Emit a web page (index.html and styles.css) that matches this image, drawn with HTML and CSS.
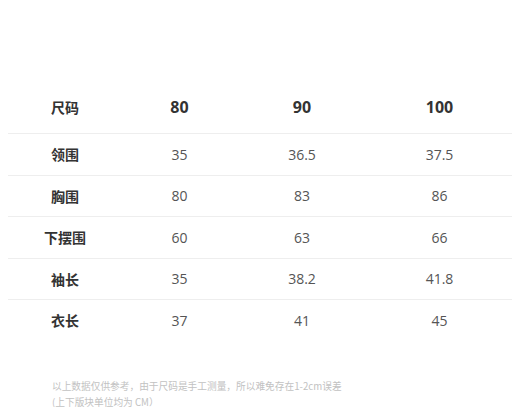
FILE: index.html
```html
<!DOCTYPE html>
<html>
<head>
<meta charset="utf-8">
<link rel="stylesheet" href="styles.css">
</head>
<body>
<div class="page">
  <div class="table">
    <div class="row head">
      <div class="label">尺码</div><div>80</div><div>90</div><div>100</div>
    </div>
    <div class="row">
      <div class="label">领围</div><div>35</div><div>36.5</div><div>37.5</div>
    </div>
    <div class="row">
      <div class="label">胸围</div><div>80</div><div>83</div><div>86</div>
    </div>
    <div class="row">
      <div class="label">下摆围</div><div>60</div><div>63</div><div>66</div>
    </div>
    <div class="row">
      <div class="label">袖长</div><div>35</div><div>38.2</div><div>41.8</div>
    </div>
    <div class="row last">
      <div class="label">衣长</div><div>37</div><div>41</div><div>45</div>
    </div>
  </div>
  <p class="note">以上数据仅供参考，由于尺码是手工测量，所以难免存在1-2cm误差<br>(上下版块单位均为 CM）</p>
</div>
</body>
</html>
```

FILE: styles.css
```css
html, body {
  margin: 0;
  padding: 0;
  background: #fff;
}
.page {
  padding: 81px 8px 0 8px;
  font-family: "Open Sans", "Noto Sans CJK SC", sans-serif;
}
.table {
  display: flex;
  flex-direction: column;
}
.row {
  display: grid;
  grid-template-columns: 114px 115px 130px 145px;
  align-items: center;
  height: 41.5px;
  border-top: 1.5px solid #eeeeee;
  box-sizing: border-box;
  font-size: 14px;
  color: #555;
  text-align: center;
}
.row.head {
  height: 52px;
  border-top: none;
  font-size: 16px;
  font-weight: 700;
  color: #333;
}
.row .label {
  font-family: "Noto Sans CJK SC", sans-serif;
  font-weight: 700;
  font-size: 14px;
  color: #333;
}
.note {
  margin: 37px 0 0 44px;
  font-family: "Noto Sans CJK SC", sans-serif;
  font-size: 9.7px;
  line-height: 16px;
  color: #c2c2c2;
}
```
